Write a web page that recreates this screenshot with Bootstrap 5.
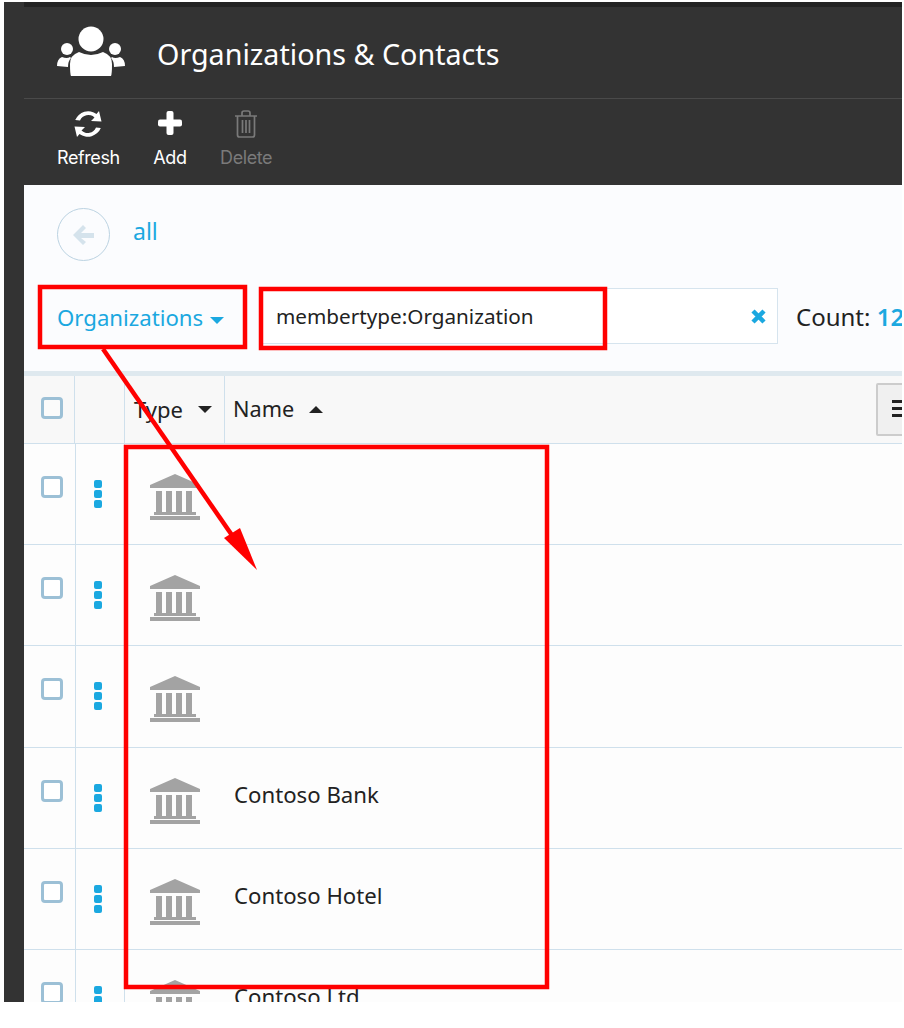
<!DOCTYPE html>
<html lang="en"><head><meta charset="utf-8"><title>Organizations & Contacts</title>
<link rel="stylesheet" href="https://cdn.jsdelivr.net/npm/bootstrap@5.3.0/dist/css/bootstrap.min.css">
<style>
html,body{margin:0;background:#fff;height:100%;overflow:hidden}
.shot{position:relative;width:904px;height:1028px;padding:2px 2px 0 4px}
.frame{height:1000px;overflow:hidden;background:#333;padding-left:20px;display:flex;flex-direction:column}
.topline{height:5px;background:#232323;flex:none}
.hdr{height:92px;padding-left:33px;gap:32px;border-bottom:1px solid #4a4a4a;flex:none}
.hdr svg{margin-top:-3px}
.hdr h1{font:400 28.7px/1 "Noto Sans",sans-serif;color:#fff;margin:3px 0 0}
.tools{height:86px;padding-left:33px;padding-top:9px;gap:33.500px;flex:none}
.tool{font:400 18px/1 "Inter","Roboto",sans-serif;letter-spacing:-.4px;color:#fff;text-align:center;display:flex;flex-direction:column;align-items:center;gap:8.500px}
.tool.off{color:#7a7a7a}
.tool svg{height:32px}
.content{background:#fbfcfe;flex:1;font-family:"Noto Sans",sans-serif;color:#222;min-height:0;overflow:hidden}
.crumb{height:99px;padding:0 0 0 33px;gap:23px}
.backc{width:53px;height:53px;border:1.5px solid #bcd3e2;border-radius:50%}
.crumb a{font-size:23px;color:#1ba8e0;text-decoration:none;margin-top:-6px}
.filter{height:87px;padding-left:33px;padding-top:5px}
.drop{font-size:22.2px;color:#1ba8e0;width:203px;flex:none;white-space:nowrap;padding-top:12px}
.caret-b{display:inline-block;border:7px solid transparent;border-top:7px solid #1ba8e0;border-bottom:0;margin-left:7px;vertical-align:middle}
.searchbox{width:518px;flex:none;height:56px;border:1px solid #d6e4ee;background:#fff;font-size:20.7px;padding:1px 11px 0 15px;margin-top:-1px}
.count{font-size:24px;margin-left:18px;flex:none;white-space:nowrap;padding-top:10px}
.count b{font-weight:600;color:#1ba8e0}
.tbl{border-top:5px solid #dfe9ef}
.trow{display:flex;border-bottom:1px solid #cfe0ec}
.trow.head{height:68px;background:#f8f8f8}
.trow.body{height:101.2px;background:#fdfdfd}
.c1{width:51px;flex:none;display:flex;padding-left:17px;border-right:1px solid #cfe0ec}
.body .c1{width:52px}
.c2{width:50px;flex:none;display:flex;padding-left:18px;border-right:1px solid #cfe0ec}
.body .c2{width:49px;padding-left:18px}
.c3{width:100px;flex:none;border-right:1px solid #cfe0ec;white-space:nowrap;padding-left:9px;display:flex;align-items:center;font-size:22px}
.c4{flex:1;padding-left:8px;font-size:22.2px;display:flex;align-items:center;white-space:nowrap;position:relative}
.head .c4{font-size:21.7px}
.body .c3{border-right:0;align-items:flex-start;padding:30px 0 0 25px}
.body .c4{align-items:flex-start;padding-top:31px;padding-left:9px;line-height:32px}
.chk{width:22px;height:22px;border:3px solid #9cc0d6;border-radius:4px;background:#fff;margin-top:32px}
.head .chk{margin-top:21px;background:#fbfbfb}
.dots{display:flex;flex-direction:column;gap:2px;margin-top:36px}
.dots i{width:8px;height:8px;border-radius:2px;background:#1ba8e0;display:block}
.ca{display:inline-block;border:7px solid transparent;margin-left:15px}
.ca.dn{border-top:7px solid #222;border-bottom:0}
.ca.up{border-bottom:7px solid #222;border-top:0}
.menubtn{position:absolute;left:651px;top:7px;width:40px;height:53px;background:#f0f0f0;border:2px solid #ccc;border-radius:2px;display:flex;flex-direction:column;gap:4px;padding:15px 0 0 14px}
.menubtn i{display:block;height:3px;width:14px;background:#222}
.notes{position:absolute;left:0;top:0;pointer-events:none}
</style></head><body>
<div class="shot">
<div class="frame">
 <div class="topline"></div>
 <div class="hdr d-flex align-items-center">
  <svg width="68" height="50" viewBox="0 0 68 50" fill="#fff"><circle cx="34" cy="13" r="12.5"/><circle cx="10" cy="23" r="6"/><circle cx="58" cy="23" r="6"/><path d="M14 50q-1-2-1-12 0-9 9-12 6 3 12 3t12-3q9 3 9 12 0 10-1 12z"/><path d="M0 40q0-7 5-9 5 2 8 0l1 1q-3 3-3 9z"/><path d="M68 40q0-7-5-9-5 2-8 0l-1 1q3 3 3 9z"/></svg>
  <h1>Organizations &amp; Contacts</h1>
 </div>
 <div class="tools d-flex align-items-start">
  <div class="tool"><svg width="30" viewBox="0 0 30 32" fill="#fff"><path d="M26 3l2.500 10.500-10.500-.5 3.500-3.600A9 9 0 0 0 7 12.500l-4.800-.4A14 14 0 0 1 23.500 6zM4 29l-2.500-10.500 10.500.5-3.500 3.600A9 9 0 0 0 23 19.500l4.800.4A14 14 0 0 1 6.500 26z"/></svg>Refresh</div>
  <div class="tool"><svg width="26" viewBox="0 0 26 32" fill="#fff"><rect x="9.500" y="3" width="7" height="24" rx="2"/><rect x="1" y="11.500" width="24" height="7" rx="2"/></svg>Add</div>
  <div class="tool off"><svg width="24" viewBox="0 0 24 32" fill="none" stroke="#7a7a7a" stroke-width="1.700"><path d="M1 8h22M8 8V5q0-2 2-2h4q2 0 2 2v3M3.500 8v19q0 2 2 2h13q2 0 2-2V8M8.500 12v13M12 12v13M15.500 12v13"/></svg>Delete</div>
 </div>
 <div class="content">
  <div class="crumb d-flex align-items-center">
   <div class="backc d-flex align-items-center justify-content-center"><svg width="22" height="20" viewBox="0 0 22 20" fill="#d5e3ec"><path d="M10 0l3 3-5 5h13v5H8l5 4-3 3L0 10z"/></svg></div>
   <a href="#">all</a>
  </div>
  <div class="filter d-flex align-items-start">
   <div class="drop">Organizations<span class="caret-b"></span></div>
   <div class="searchbox d-flex align-items-center justify-content-between"><span>membertype:Organization</span>
    <svg width="15" height="15" viewBox="0 0 15 15" stroke="#1ba8e0" stroke-width="4.500"><path d="M2 2l11 11M13 2L2 13"/></svg></div>
   <div class="count">Count: <b>12</b></div>
  </div>
  <div class="tbl">
   <div class="trow head"><div class="c1"><span class="chk"></span></div><div class="c2"></div><div class="c3">Type<span class="ca dn"></span></div><div class="c4">Name<span class="ca up"></span><div class="menubtn"><i></i><i></i><i></i></div></div></div>
   <div class="trow body"><div class="c1"><span class="chk"></span></div><div class="c2"><div class="dots"><i></i><i></i><i></i></div></div><div class="c3"><svg width="50" height="46"><use href="#bank"/></svg></div><div class="c4"></div></div>
   <div class="trow body"><div class="c1"><span class="chk"></span></div><div class="c2"><div class="dots"><i></i><i></i><i></i></div></div><div class="c3"><svg width="50" height="46"><use href="#bank"/></svg></div><div class="c4"></div></div>
   <div class="trow body"><div class="c1"><span class="chk"></span></div><div class="c2"><div class="dots"><i></i><i></i><i></i></div></div><div class="c3"><svg width="50" height="46"><use href="#bank"/></svg></div><div class="c4"></div></div>
   <div class="trow body"><div class="c1"><span class="chk"></span></div><div class="c2"><div class="dots"><i></i><i></i><i></i></div></div><div class="c3"><svg width="50" height="46"><use href="#bank"/></svg></div><div class="c4">Contoso Bank</div></div>
   <div class="trow body"><div class="c1"><span class="chk"></span></div><div class="c2"><div class="dots"><i></i><i></i><i></i></div></div><div class="c3"><svg width="50" height="46"><use href="#bank"/></svg></div><div class="c4">Contoso Hotel</div></div>
   <div class="trow body"><div class="c1"><span class="chk"></span></div><div class="c2"><div class="dots"><i></i><i></i><i></i></div></div><div class="c3"><svg width="50" height="46"><use href="#bank"/></svg></div><div class="c4">Contoso Ltd</div></div>
  </div>
 </div>
</div>
<svg class="notes" width="904" height="1028" fill="none" stroke="#f00" stroke-width="4.500">
 <symbol id="bank" viewBox="0 0 50 46"><path fill="#a3a3a3" stroke="none" d="M25 0L50 11v3H0v-3zM6 17h6v21H6zM16 17h6v21h-6zM26 17h6v21h-6zM36 17h6v21h-6zM4 38h42v3H4zM0 42h50v4H0z"/></symbol>
 <rect x="40" y="287" width="205" height="60"/>
 <rect x="261" y="289" width="344" height="59"/>
 <rect x="126" y="447" width="421" height="540"/>
 <path d="M103 349L236 541"/><path fill="#f00" stroke="none" d="M224 538L240 528L257 570z"/>
</svg>
</div>
</body></html>
